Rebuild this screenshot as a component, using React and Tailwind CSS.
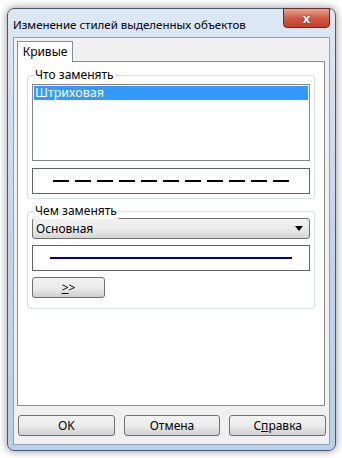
import React from 'react';

const font = { fontFamily: '"Noto Sans", "Liberation Sans", sans-serif' };

function GroupBox({ title, className, children }) {
  return (
    <div className={`relative rounded-[3px] border border-[#d5dfe5] ${className}`}>
      <span className="absolute left-[5px] top-[-9px] bg-white px-[2px] text-[12px] leading-[16px] text-black">{title}</span>
      {children}
    </div>
  );
}

function Button({ children, className }) {
  return (
    <button className={`flex h-[21px] items-center justify-center rounded-[3px] border border-[#707070] bg-gradient-to-b from-[#f2f2f2] via-[#ebebeb] to-[#cfcfcf] text-[12px] text-black ${className}`}>
      {children}
    </button>
  );
}

export default function App() {
  return (
    <div className="h-[458px] w-[342px] overflow-hidden bg-white pl-[7px] pt-[8px]" style={font}>
      {/* окно */}
      <div className="flex h-[443px] w-[329px] flex-col rounded-[7px] border border-[#4d5a69] bg-gradient-to-b from-[#dce8f5] via-[#c2d6ec] to-[#b9d0ea] shadow-[0_0_8px_rgba(0,0,0,0.45)]">
        <div className="relative flex h-[28px] items-center pl-[5px] pt-[3px]">
          <span className="text-[11.5px] text-black">Изменение стилей выделенных объектов</span>
          <div className="absolute right-[5px] top-[-1px] flex h-[20px] w-[47px] items-center justify-center rounded-b-[4px] border border-[#6e2a25] bg-gradient-to-b from-[#e8a493] via-[#cf5a44] to-[#c23e2a]">
            <span className="text-[13px] font-bold leading-none text-white" style={{ textShadow: '0 0 2px #5a1a10' }}>x</span>
          </div>
        </div>

        {/* клиентская область */}
        <div className="mx-[5px] mb-[5px] flex flex-1 flex-col border border-[#8ea3bb] bg-[#f0f0f0] px-[3px] pt-[3px]">
          <div className="flex">
            <div className="z-10 -mb-px flex h-[21px] w-[56px] items-center justify-center border border-b-0 border-[#898c95] bg-white text-[12px]">
              Кривые
            </div>
          </div>
          <div className="h-[345px] w-[308px] border border-[#898c95] bg-white px-[9px] pt-[13px]">
            <GroupBox title="Что заменять" className="h-[124px] px-[4px] pt-[8px]">
              <div className="h-[77px] border border-[#828790] bg-white p-[1px]">
                <div className="flex h-[14px] items-center bg-[#3399ff] px-[1px] text-[12.5px] text-white">Штриховая</div>
              </div>
              <div className="mt-[7px] flex h-[26px] items-center justify-center border border-[#646464] bg-white">
                <div className="flex gap-[6px]">
                  {Array.from({ length: 11 }).map((_, i) => (
                    <div key={i} className="h-[2px] w-[16px] bg-black" />
                  ))}
                </div>
              </div>
            </GroupBox>

            <GroupBox title="Чем заменять" className="mt-[12px] h-[98px] px-[4px] pt-[6px]">
              <div className="flex h-[21px] items-center justify-between rounded-[3px] border border-[#707070] bg-gradient-to-b from-[#f2f2f2] via-[#ebebeb] to-[#d5d5d5] pl-[3px] pr-[6px] text-[12px]">
                <span>Основная</span>
                <svg width="8" height="5" viewBox="0 0 8 5"><path d="M0 0H8L4 5Z" fill="#000" /></svg>
              </div>
              <div className="mt-[6px] flex h-[26px] items-center justify-center border border-[#646464] bg-white">
                <div className="h-[2px] w-[242px] bg-[#000080]" />
              </div>
              <Button className="mt-[6px] w-[73px]">
                <span className="underline">&gt;</span>&gt;
              </Button>
            </GroupBox>
          </div>

          <div className="mt-[9px] flex gap-[9px] pl-[1px]">
            <Button className="w-[97px]">OK</Button>
            <Button className="w-[97px]">Отмена</Button>
            <Button className="w-[97px]">
              С<span className="underline">п</span>равка
            </Button>
          </div>
        </div>
      </div>
    </div>
  );
}
